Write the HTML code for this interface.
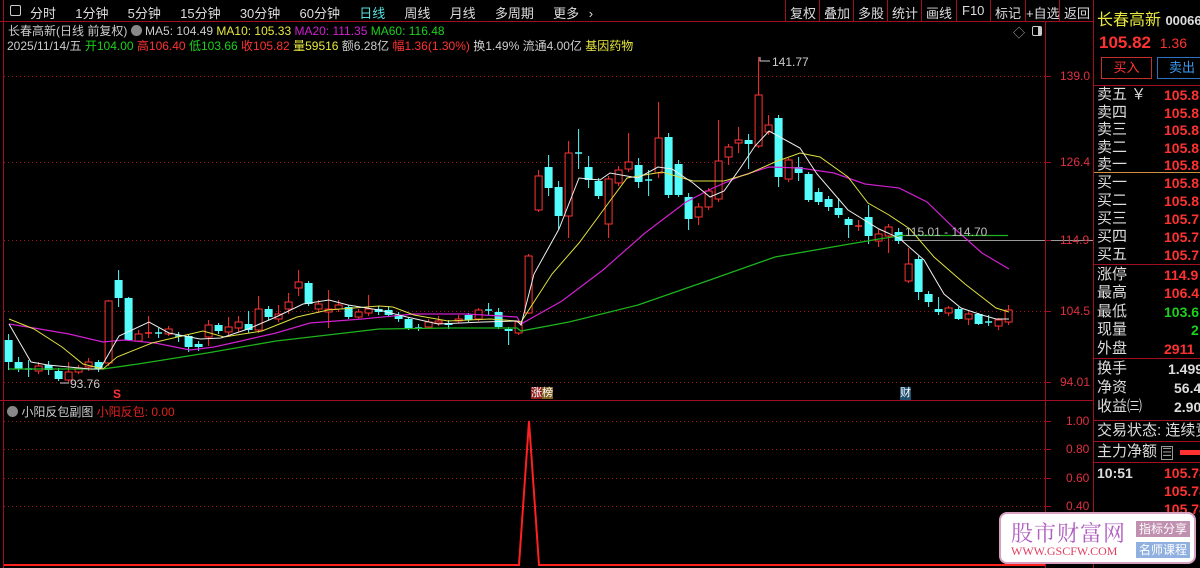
<!DOCTYPE html>
<html><head><meta charset="utf-8">
<style>
*{margin:0;padding:0;box-sizing:border-box}
body{width:1200px;height:568px;background:#000;overflow:hidden;position:relative;font-family:"Liberation Sans","Noto Sans CJK SC",sans-serif;font-size:12px;color:#ccc}
.a{position:absolute;white-space:nowrap}
.rp{position:absolute;left:1097px;font-size:15px;color:#ddd;line-height:18px}
.rv{position:absolute;right:0;font-size:14px;font-weight:bold;color:#ff3232;line-height:18px}
.hl{position:absolute;left:1094px;width:106px;height:1px;background:#a01020}
</style></head><body>
<svg width="1200" height="568" style="position:absolute;left:0;top:0" id="s">
<!-- frame lines -->
<line x1="0" y1="21.5" x2="1093" y2="21.5" stroke="#a01020"/>
<line x1="3.5" y1="0" x2="3.5" y2="568" stroke="#a01020"/>
<line x1="1045.5" y1="22" x2="1045.5" y2="568" stroke="#a01020"/>
<line x1="1093.5" y1="0" x2="1093.5" y2="568" stroke="#a01020"/>
<line x1="0" y1="400.5" x2="1093" y2="400.5" stroke="#a01020"/>
<g stroke="#a01020" stroke-dasharray="1,3">
<line x1="4" y1="76.5" x2="1045" y2="76.5"/><line x1="4" y1="162.5" x2="1045" y2="162.5"/>
<line x1="4" y1="311.5" x2="1045" y2="311.5"/><line x1="4" y1="382.5" x2="1045" y2="382.5"/>
<line x1="4" y1="240.5" x2="900" y2="240.5"/>
<line x1="4" y1="421.5" x2="1045" y2="421.5"/><line x1="4" y1="449.5" x2="1045" y2="449.5"/>
<line x1="4" y1="478.5" x2="1045" y2="478.5"/><line x1="4" y1="506.5" x2="1045" y2="506.5"/>
</g>
<line x1="900" y1="240.5" x2="1093" y2="240.5" stroke="#999"/>
<g stroke="#a01020"><line x1="1045" y1="76.5" x2="1051" y2="76.5"/><line x1="1045" y1="162.5" x2="1051" y2="162.5"/><line x1="1045" y1="240.5" x2="1051" y2="240.5"/><line x1="1045" y1="311.5" x2="1051" y2="311.5"/><line x1="1045" y1="382.5" x2="1051" y2="382.5"/>
<line x1="1045" y1="421.5" x2="1051" y2="421.5"/><line x1="1045" y1="449.5" x2="1051" y2="449.5"/><line x1="1045" y1="478.5" x2="1051" y2="478.5"/><line x1="1045" y1="506.5" x2="1051" y2="506.5"/></g>
<g id="cd"></g>
<!-- MAs -->
<polyline fill="none" stroke="#1db31d" stroke-width="1.3" points="9,369 103,369 138,364 207,353 276,341 345,333 379,329 448,328 517,328 521,331 569,322 638,305 707,281 775,257 844,245 879,239 899,236"/>
<line x1="899" y1="235.5" x2="1008" y2="235.5" stroke="#1db31d" stroke-width="1.3"/>
<polyline fill="none" stroke="#d020d0" stroke-width="1.2" points="9,324 34,328 69,334 103,342 124,340 155,343 190,350 214,347 241,341 276,333 310,323 362,319 414,314 466,314 517,317 521,324 562,301 603,270 645,233 686,202 713,188 741,176 769,167 800,168 834,173 865,184 899,188 927,202 955,229 982,253 1009,269"/>
<polyline fill="none" stroke="#e0e040" stroke-width="1" points="9,319 34,329 62,347 83,364 103,369 117,357 152,343 203,331 224,337 262,331 297,317 328,310 379,306 393,307 414,315 448,321 490,319 517,321 521,322 552,274 579,243 607,205 627,178 662,172 693,181 724,181 748,174 775,162 800,153 820,157 848,177 868,203 889,215 910,229 934,257 965,284 996,308 1009,312"/>
<polyline fill="none" stroke="#eee" stroke-width="1" points="9,324 31,362 48,365 90,369 100,369 119,336 149,322 169,333 200,339 221,338 248,329 276,317 303,304 329,300 348,305 379,310 407,317 438,324 483,322 517,321 521,325 534,274 559,229 579,178 600,180 610,173 638,178 658,167 672,169 693,183 710,197 724,191 741,167 755,146 769,131 800,148 817,174 848,210 879,229 899,238 924,260 944,294 961,308 982,315 996,319 1009,319"/>
<!-- sub chart spike -->
<polyline fill="none" stroke="#ff2020" stroke-width="2" points="4,565 519,565 529,421 539,565 1045,565"/>
<!-- annotations -->
<text x="772" y="66" fill="#ccc" font-size="12" font-family="Liberation Sans">141.77</text>
<polyline fill="none" stroke="#ccc" points="760,57 760,61 770,61"/>
<text x="70" y="388" fill="#ccc" font-size="12" font-family="Liberation Sans">93.76</text>
<line x1="60" y1="383" x2="69" y2="383" stroke="#ccc"/>
<text x="905" y="236" fill="#bbb" font-size="12" font-family="Liberation Sans">115.01 - 114.70</text>
</svg>

<!-- toolbar -->
<div class="a" style="left:10px;top:5px;width:11px;height:11px;border:1px solid #ccc;border-radius:2px"></div>
<div class="a" style="left:30px;top:3px;font-size:13px;color:#ddd;word-spacing:6px">分时 &nbsp;1分钟 &nbsp;5分钟 &nbsp;15分钟 &nbsp;30分钟 &nbsp;60分钟 &nbsp;<span style="color:#54e0e0">日线</span> &nbsp;周线 &nbsp;月线 &nbsp;多周期 &nbsp;更多 ›</div>
<div class="a" style="left:785px;top:0;height:21px;font-size:13px;color:#ddd">
<span style="position:absolute;left:5px;top:3px">复权</span><span style="position:absolute;left:39px;top:3px">叠加</span><span style="position:absolute;left:73px;top:3px">多股</span><span style="position:absolute;left:107px;top:3px">统计</span><span style="position:absolute;left:141px;top:3px">画线</span><span style="position:absolute;left:177px;top:3px">F10</span><span style="position:absolute;left:210px;top:3px">标记</span><span style="position:absolute;left:241px;top:3px">+自选</span><span style="position:absolute;left:279px;top:3px">返回</span></div>
<div class="a" style="left:785px;top:0;width:308px;height:21px;border-left:1px solid #a01020;background:linear-gradient(90deg,transparent 33px,#a01020 33px,#a01020 34px,transparent 34px,transparent 67px,#a01020 67px,#a01020 68px,transparent 68px,transparent 101px,#a01020 101px,#a01020 102px,transparent 102px,transparent 135px,#a01020 135px,#a01020 136px,transparent 136px,transparent 170px,#a01020 170px,#a01020 171px,transparent 171px,transparent 204px,#a01020 204px,#a01020 205px,transparent 205px,transparent 239px,#a01020 239px,#a01020 240px,transparent 240px,transparent 273px,#a01020 273px,#a01020 274px,transparent 274px)"></div>
<div class="a" style="left:1013px;top:24px;color:#aaa;font-size:12px">◇</div>
<div class="a" style="left:1032px;top:26px;width:10px;height:10px;border:1px solid #ccc;border-radius:2px;background:linear-gradient(90deg,transparent 5px,#ccc 5px)"></div>

<div class="a" style="left:8px;top:22px;font-size:12px;color:#ccc">长春高新(日线 前复权) <span style="display:inline-block;width:11px;height:11px;border-radius:6px;background:#888;vertical-align:-1px"></span> <span>MA5: 104.49</span> <span style="color:#e8e840">MA10: 105.33</span> <span style="color:#d020d0">MA20: 111.35</span> <span style="color:#1dd01d">MA60: 116.48</span></div>
<div class="a" style="left:7px;top:37px;font-size:12px;color:#ccc">2025/11/14/五 <span style="color:#1dd01d">开104.00</span> <span style="color:#ff3232">高106.40</span> <span style="color:#1dd01d">低103.66</span> <span style="color:#ff3232">收105.82</span> <span style="color:#e8e840">量59516</span> 额6.28亿 <span style="color:#ff3232">幅1.36(1.30%)</span> 换1.49% 流通4.00亿 <span style="color:#e8e840">基因药物</span></div>

<!-- axis labels -->
<div class="a" style="left:1060px;top:69px;color:#e03040;font-size:12px">139.0</div>
<div class="a" style="left:1060px;top:155px;color:#e03040;font-size:12px">126.4</div>
<div class="a" style="left:1060px;top:233px;color:#e03040;font-size:12px">114.9</div>
<div class="a" style="left:1060px;top:304px;color:#e03040;font-size:12px">104.5</div>
<div class="a" style="left:1060px;top:375px;color:#e03040;font-size:12px">94.01</div>
<div class="a" style="left:1066px;top:414px;color:#e03040;font-size:12px">1.00</div>
<div class="a" style="left:1066px;top:442px;color:#e03040;font-size:12px">0.80</div>
<div class="a" style="left:1066px;top:471px;color:#e03040;font-size:12px">0.60</div>
<div class="a" style="left:1066px;top:499px;color:#e03040;font-size:12px">0.40</div>

<div class="a" style="left:113px;top:387px;color:#ff3232;font-size:12px;font-weight:bold">S</div>
<div class="a" style="left:531px;top:387px;font-size:11px;line-height:13px;color:#fff"><span style="background:#902020">涨</span><span style="background:#806020">榜</span></div>
<div class="a" style="left:900px;top:387px;font-size:11px;line-height:13px;color:#fff;background:#205070">财</div>

<div class="a" style="left:7px;top:403px;font-size:12px;color:#ccc"><span style="display:inline-block;width:11px;height:11px;border-radius:6px;background:#888;vertical-align:-1px"></span> 小阳反包副图 <span style="color:#e02020">小阳反包: 0.00</span></div>

<!-- right panel -->
<div class="a" style="left:1097px;top:6px;font-size:16px;color:#e8e840">长春高新 <span style="font-size:13px;color:#ddd;font-weight:bold">000661</span></div>
<div class="a" style="left:1099px;top:33px;font-size:17px;font-weight:bold;color:#ff3232">105.82 <span style="font-size:14px;font-weight:normal;margin-left:4px">1.36</span></div>
<div class="a" style="left:1101px;top:57px;width:51px;height:22px;border:1px solid #c03030;color:#ff3232;font-size:13px;text-align:center;line-height:20px">买入</div>
<div class="a" style="left:1157px;top:57px;width:50px;height:22px;border:1px solid #3070c0;color:#3a9af0;font-size:13px;text-align:center;line-height:20px">卖出</div>
<div class="hl" style="top:85px"></div>
<div class="hl" style="top:172px;background:#d09040"></div>
<div class="hl" style="top:264px"></div>
<div class="hl" style="top:358px"></div>
<div class="hl" style="top:420px"></div>
<div class="hl" style="top:441px"></div>
<div class="hl" style="top:462px"></div>
<div style="position:absolute;left:1094px;top:0;width:106px;height:568px;overflow:hidden">
<div style="position:absolute;left:0;top:0;width:300px">
<div class="rp" style="left:3px;top:86px">卖五 ￥</div><div class="rv" style="left:70px;top:86px">105.8</div>
<div class="rp" style="left:3px;top:104px">卖四</div><div class="rv" style="left:70px;top:104px">105.8</div>
<div class="rp" style="left:3px;top:121px">卖三</div><div class="rv" style="left:70px;top:121px">105.8</div>
<div class="rp" style="left:3px;top:139px">卖二</div><div class="rv" style="left:70px;top:139px">105.8</div>
<div class="rp" style="left:3px;top:156px">卖一</div><div class="rv" style="left:70px;top:156px">105.8</div>
<div class="rp" style="left:3px;top:174px">买一</div><div class="rv" style="left:70px;top:174px">105.8</div>
<div class="rp" style="left:3px;top:192px">买二</div><div class="rv" style="left:70px;top:192px">105.8</div>
<div class="rp" style="left:3px;top:210px">买三</div><div class="rv" style="left:70px;top:210px">105.7</div>
<div class="rp" style="left:3px;top:228px">买四</div><div class="rv" style="left:70px;top:228px">105.7</div>
<div class="rp" style="left:3px;top:246px">买五</div><div class="rv" style="left:70px;top:246px">105.7</div>
<div class="rp" style="left:3px;top:266px">涨停</div><div class="rv" style="left:70px;top:266px">114.9</div>
<div class="rp" style="left:3px;top:284px">最高</div><div class="rv" style="left:70px;top:284px">106.4</div>
<div class="rp" style="left:3px;top:303px">最低</div><div class="rv" style="left:70px;top:303px;color:#1dd01d">103.6</div>
<div class="rp" style="left:3px;top:321px">现量</div><div class="rv" style="left:97px;top:321px;color:#1dd01d">2</div>
<div class="rp" style="left:3px;top:340px">外盘</div><div class="rv" style="left:70px;top:340px">2911</div>
<div class="rp" style="left:3px;top:360px">换手</div><div class="rv" style="left:74px;top:360px;color:#ddd">1.499</div>
<div class="rp" style="left:3px;top:379px">净资</div><div class="rv" style="left:80px;top:379px;color:#ddd">56.4</div>
<div class="rp" style="left:3px;top:398px">收益㈢</div><div class="rv" style="left:80px;top:398px;color:#ddd">2.90</div>
<div class="rp" style="left:3px;top:422px">交易状态: 连续竞价</div>
<div class="rp" style="left:3px;top:443px">主力净额 <span style="font-size:11px;border:1px solid #999;color:#999">☰</span></div>
<div class="a" style="left:86px;top:450px;width:30px;height:5px;background:#ff3232"></div>
<div class="rv" style="left:3px;top:464px;color:#ddd">10:51</div><div class="rv" style="left:70px;top:464px">105.78</div>
<div class="rv" style="left:70px;top:482px">105.78</div>
<div class="rv" style="left:70px;top:500px">105.78</div>
</div></div>

<!-- watermark -->
<div class="a" style="left:999px;top:512px;width:197px;height:52px;background:#fff;border:2px solid #d8a0c0;border-radius:8px">
<div class="a" style="left:10px;top:3px;font-size:22px;color:#b060c0;letter-spacing:1px;font-family:'Noto Serif CJK SC',serif">股市财富网</div>
<div class="a" style="left:10px;top:30px;font-size:12px;color:#e04060;font-family:'Liberation Serif',serif">WWW.GSCFW.COM</div>
<div class="a" style="left:135px;top:7px;width:54px;height:16px;background:#c090b0;color:#fff;font-size:12px;text-align:center;line-height:16px">指标分享</div>
<div class="a" style="left:135px;top:28px;width:54px;height:16px;background:#90b0e0;color:#fff;font-size:12px;text-align:center;line-height:16px">名师课程</div>
</div>

<script>
var d=[
[1,'c',340,362,334,370],[2,'c',362,369,357,372],[3,'c',369,369,360,377],[4,'r',366,371,362,374],[5,'c',365,370,361,375],[6,'c',371,379,368,381],[7,'r',372,380,362,382],[8,'r',368,372,365,374],[9,'r',362,367,358,371],[10,'c',362,369,360,372],
[11,'r',301,363,300,366],[12,'c',280,298,270,307],[13,'c',298,340,297,341],[14,'r',334,341,330,342],[15,'r',333,333,316,338],[16,'c',333,333,328,338],[17,'r',329,334,326,336],[18,'c',336,336,332,342],[19,'c',336,347,334,352],[20,'c',344,347,341,351],
[21,'r',325,337,320,346],[22,'c',325,331,323,334],[23,'r',327,332,317,337],[24,'r',322,328,316,332],[25,'c',324,330,311,333],[26,'r',309,330,296,333],[27,'c',309,317,306,320],[28,'r',314,319,305,322],[29,'r',302,309,293,314],[30,'r',282,288,270,296],
[31,'c',283,304,281,306],[32,'r',304,309,300,313],[33,'r',309,312,290,328],[34,'r',305,309,300,312],[35,'c',307,317,305,319],[36,'r',312,317,309,319],[37,'r',309,313,295,316],[38,'c',309,312,306,315],[39,'c',310,315,306,317],[40,'c',315,319,312,322],
[41,'c',319,329,317,330],[42,'c',328,328,324,331],[43,'r',322,327,319,328],[44,'r',321,323,316,326],[45,'c',323,325,320,329],[46,'r',319,321,315,323],[47,'c',315,320,313,322],[48,'r',310,319,308,321],[49,'c',310,310,303,315],[50,'c',312,327,308,329],
[51,'c',329,331,327,345],[52,'r',322,333,320,335],[53,'r',256,313,254,314],[54,'r',176,210,170,212],[55,'c',167,188,155,196],[56,'c',187,216,181,229],[57,'r',153,216,141,238],[58,'c',153,153,129,169],[59,'c',167,180,156,188],[60,'c',181,196,178,199],
[61,'r',179,224,176,238],[62,'r',170,183,166,186],[63,'r',162,169,133,172],[64,'c',165,182,158,188],[65,'c',180,180,170,196],[66,'r',138,173,102,178],[67,'c',137,195,133,198],[68,'c',164,195,160,197],[69,'c',197,219,193,230],[70,'r',207,217,203,225],
[71,'r',191,207,188,210],[72,'r',161,199,120,202],[73,'r',147,157,144,165],[74,'r',140,143,127,153],[75,'c',140,144,134,169],[76,'r',95,146,57,148],[77,'r',125,132,115,135],[78,'c',118,177,115,187],[79,'r',160,179,158,182],[80,'c',167,173,157,181],
[81,'c',174,200,172,202],[82,'c',192,202,188,205],[83,'c',199,207,196,211],[84,'c',208,215,198,218],[85,'c',219,225,217,238],[86,'r',226,226,220,231],[87,'c',217,236,205,244],[88,'r',234,241,229,247],[89,'r',227,236,224,253],[90,'c',232,241,228,244],
[91,'r',264,281,248,283],[92,'c',259,292,256,300],[93,'c',294,302,291,307],[94,'c',309,312,297,315],[95,'r',308,313,306,316],[96,'c',309,319,307,320],[97,'r',314,319,311,325],[98,'c',314,324,313,325],[99,'c',322,322,315,326],[100,'r',320,326,318,330],[101,'r',310,322,305,325]
];
var s='';
for(var k=0;k<d.length;k++){var c=d[k],x=8.6+10*(c[0]-1),col=c[1]=='r'?'#ff3232':'#54fcfc';
s+='<line x1="'+x+'" y1="'+c[4]+'" x2="'+x+'" y2="'+c[5]+'" stroke="'+col+'"/>';
var h=c[3]-c[2];
if(h<1){s+='<line x1="'+(x-3.5)+'" y1="'+c[2]+'" x2="'+(x+3.5)+'" y2="'+c[2]+'" stroke="'+col+'" stroke-width="1.5"/>';}
else if(c[1]=='r'){s+='<rect x="'+(x-3.5)+'" y="'+c[2]+'" width="7" height="'+h+'" fill="#000" stroke="'+col+'"/>';}
else{s+='<rect x="'+(x-4)+'" y="'+c[2]+'" width="8" height="'+h+'" fill="'+col+'"/>';}}
document.getElementById('cd').innerHTML=s;
</script>
</body></html>
